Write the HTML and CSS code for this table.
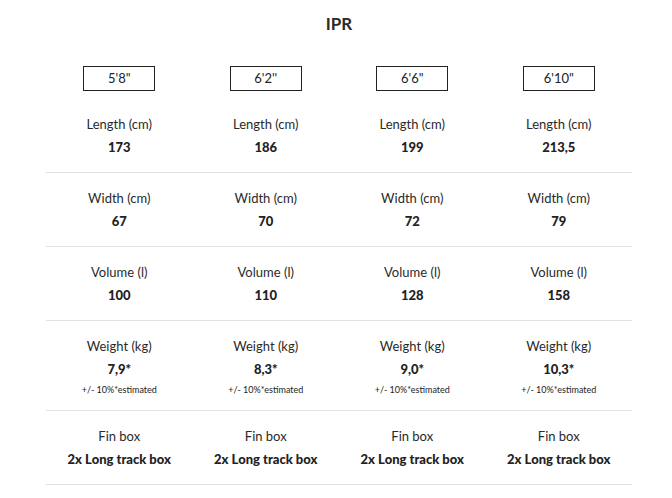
FILE: index.html
```html
<!DOCTYPE html>
<html>
<head>
<meta charset="utf-8">
<link rel="stylesheet" href="styles.css">
</head>
<body>
<div class="wrap">
  <h1 class="title">IPR</h1>
  <div class="row head">
    <div class="cell"><span class="size">5'8"</span><div class="label">Length (cm)</div><div class="value">173</div></div>
    <div class="cell"><span class="size">6'2''</span><div class="label">Length (cm)</div><div class="value">186</div></div>
    <div class="cell"><span class="size">6'6"</span><div class="label">Length (cm)</div><div class="value">199</div></div>
    <div class="cell"><span class="size">6'10"</span><div class="label">Length (cm)</div><div class="value">213,5</div></div>
  </div>
  <div class="row">
    <div class="cell"><div class="label">Width (cm)</div><div class="value">67</div></div>
    <div class="cell"><div class="label">Width (cm)</div><div class="value">70</div></div>
    <div class="cell"><div class="label">Width (cm)</div><div class="value">72</div></div>
    <div class="cell"><div class="label">Width (cm)</div><div class="value">79</div></div>
  </div>
  <div class="row">
    <div class="cell"><div class="label">Volume (l)</div><div class="value">100</div></div>
    <div class="cell"><div class="label">Volume (l)</div><div class="value">110</div></div>
    <div class="cell"><div class="label">Volume (l)</div><div class="value">128</div></div>
    <div class="cell"><div class="label">Volume (l)</div><div class="value">158</div></div>
  </div>
  <div class="row weight">
    <div class="cell"><div class="label">Weight (kg)</div><div class="value">7,9*</div><div class="note">+/- 10%*estimated</div></div>
    <div class="cell"><div class="label">Weight (kg)</div><div class="value">8,3*</div><div class="note">+/- 10%*estimated</div></div>
    <div class="cell"><div class="label">Weight (kg)</div><div class="value">9,0*</div><div class="note">+/- 10%*estimated</div></div>
    <div class="cell"><div class="label">Weight (kg)</div><div class="value">10,3*</div><div class="note">+/- 10%*estimated</div></div>
  </div>
  <div class="row">
    <div class="cell"><div class="label">Fin box</div><div class="value">2x Long track box</div></div>
    <div class="cell"><div class="label">Fin box</div><div class="value">2x Long track box</div></div>
    <div class="cell"><div class="label">Fin box</div><div class="value">2x Long track box</div></div>
    <div class="cell"><div class="label">Fin box</div><div class="value">2x Long track box</div></div>
  </div>
</div>
</body>
</html>
```
FILE: styles.css
```css
* { box-sizing: border-box; }
html, body { margin: 0; padding: 0; background: #fff; }
body {
  font-family: Lato, "Noto Sans", sans-serif;
  color: #222;
}
.wrap {
  width: 586px;
  margin-left: 46px;
}
.title {
  margin: 0;
  padding-top: 13px;
  height: 66px;
  font-size: 17px;
  line-height: 22px;
  font-weight: 700;
  text-align: center;
  color: #2a2a2a;
}
.row {
  display: grid;
  grid-template-columns: repeat(4, 1fr);
  padding: 16px 0 16px;
  border-bottom: 1px solid #e3e3e3;
}
.row.head {
  padding-top: 0;
  padding-bottom: 16px;
}
.row.weight { padding-bottom: 13px; }
.cell {
  display: flex;
  flex-direction: column;
  align-items: center;
  text-align: center;
}
.size {
  display: block;
  width: 72px;
  height: 25px;
  border: 1px solid #222;
  font-size: 13px;
  line-height: 23px;
  margin-bottom: 24px;
}
.label {
  font-size: 13px;
  line-height: 18px;
  color: #2a2a2a;
}
.value {
  margin-top: 5px;
  font-size: 13px;
  line-height: 18px;
  font-weight: 900;
  color: #222;
}
.note {
  margin-top: 5px;
  font-size: 9px;
  line-height: 14px;
  color: #222;
}
```
